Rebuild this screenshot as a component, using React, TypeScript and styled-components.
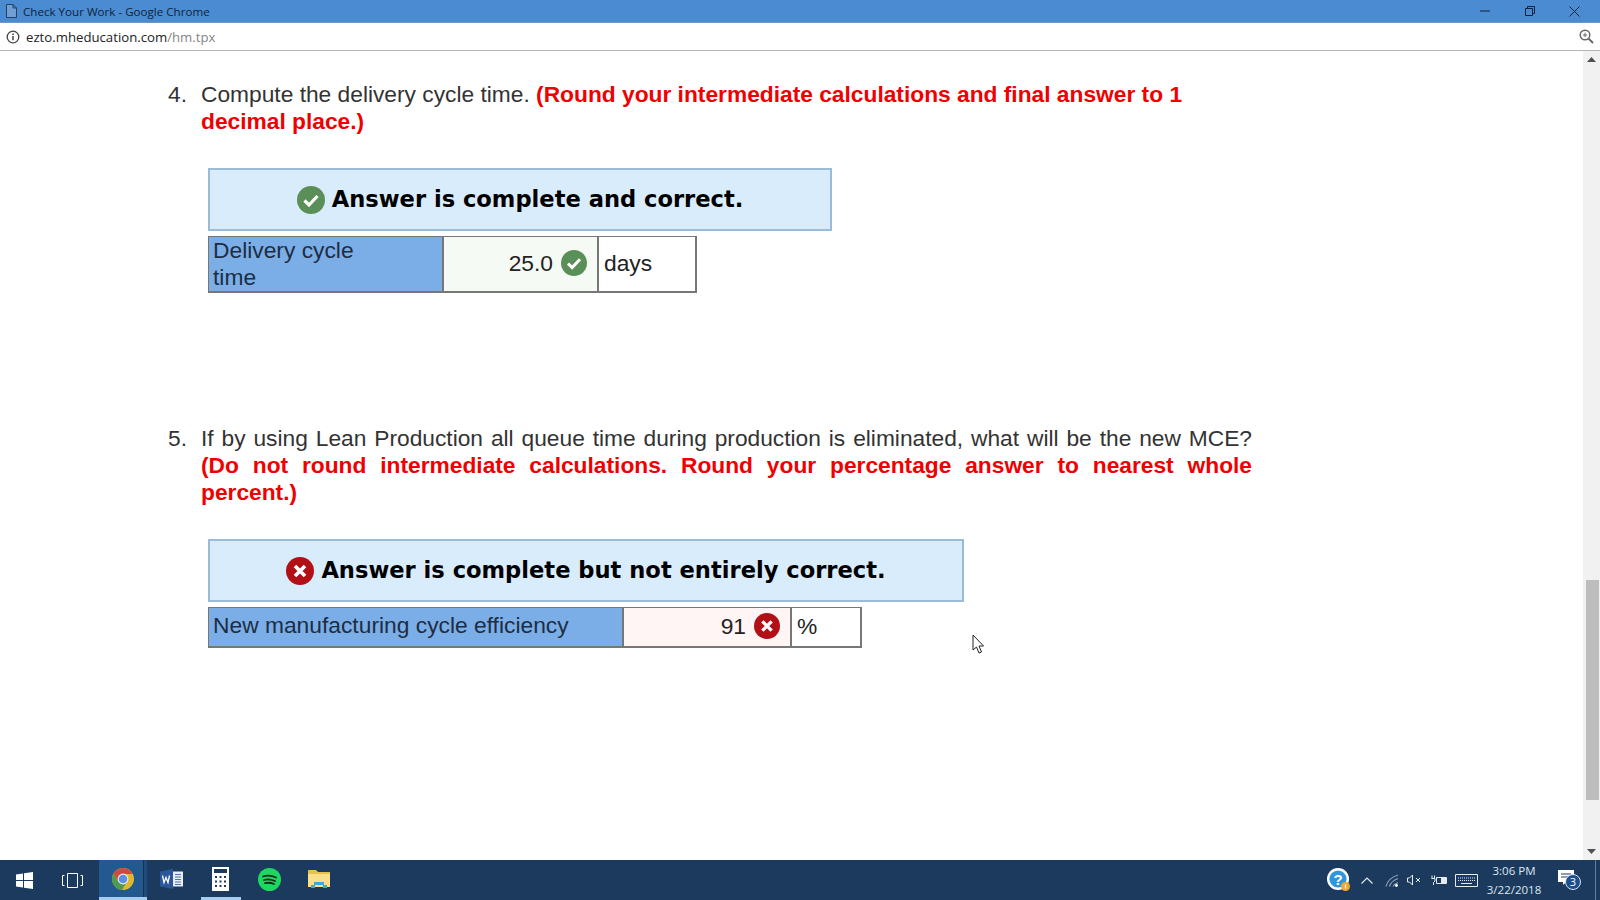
import React from "react"
import styled, { createGlobalStyle } from "styled-components"

const Global = createGlobalStyle`
  html, body { margin: 0; padding: 0; background: #fff; overflow: hidden; }
  body { font-family: "Liberation Sans", Arial, sans-serif; }
`

const Screen = styled.div`
  position: relative;
  display: flex;
  flex-direction: column;
  width: 1600px;
  height: 900px;
  overflow: hidden;
`

const TitleBar = styled.div`
  display: flex;
  align-items: center;
  height: 23px;
  flex: none;
  padding-left: 6px;
  background: #4a8bd1;
  border-bottom: 1px solid #6f98c4;
  box-sizing: border-box;
`
const TitleText = styled.span`
  margin-left: 6px;
  flex: 1;
  font-family: "Open Sans", sans-serif;
  font-size: 11.6px;
  color: #10233a;
`
const WindowButton = styled.div`
  display: flex;
  justify-content: center;
  width: 45px;
`
const WindowButtons = styled.div`
  display: flex;
  margin-right: 3px;
`

const AddressBar = styled.div`
  display: flex;
  align-items: center;
  height: 28px;
  flex: none;
  padding: 0 6px;
  box-sizing: border-box;
  background: #fff;
  border-bottom: 1px solid #b4b4b4;
`
const Url = styled.span`
  margin-left: 6px;
  flex: 1;
  font-family: "Open Sans", sans-serif;
  font-size: 13.2px;
  color: #222;
`
const UrlPath = styled.span`
  color: #858585;
`

const Body = styled.div`
  display: flex;
  flex: 1;
  min-height: 0;
`
const Page = styled.main`
  flex: 1;
  padding: 30px 0 0 168px;
  background: #fff;
`
const Question = styled.section<{ $gap: number }>`
  display: flex;
  width: 1084px;
  margin-bottom: ${(p) => p.$gap}px;
  font-size: 22.75px;
  line-height: 27px;
  color: #333;
`
const Num = styled.div`
  width: 33px;
  flex: none;
`
const Prompt = styled.div<{ $justify?: boolean }>`
  flex: 1;
  ${(p) => p.$justify && "text-align: justify;"}
`
const Red = styled.strong`
  color: #f00000;
`
const Answer = styled.div<{ $gap: number }>`
  margin: 0 0 ${(p) => p.$gap}px 40px;
`
const Banner = styled.div<{ $w: number }>`
  display: flex;
  align-items: center;
  justify-content: center;
  gap: 7px;
  box-sizing: border-box;
  width: ${(p) => p.$w}px;
  height: 63px;
  padding-bottom: 2px;
  background: #d9ecfb;
  border: 2px solid #9bbcd9;
  font-family: "DejaVu Sans", sans-serif;
  font-weight: bold;
  font-size: 22.6px;
  color: #000;

  svg {
    margin-top: 2px;
  }
`
const Row = styled.div<{ $h: number }>`
  display: flex;
  width: fit-content;
  height: ${(p) => p.$h}px;
  margin-top: 5px;
  box-sizing: border-box;
  border: 2px solid #777;
  border-top-width: 1px;
  border-left-width: 1px;
  font-size: 22.8px;
  line-height: 27px;
  color: #222;
`
const LabelCell = styled.div<{ $w: number; $lift?: number }>`
  display: flex;
  align-items: center;
  box-sizing: border-box;
  width: ${(p) => p.$w}px;
  padding: 0 0 ${(p) => p.$lift ?? 0}px 4px;
  background: #7baee6;
  border-right: 2px solid #777;
  color: #1d2d44;
`
const ValueCell = styled.div<{ $w: number; $tint: string }>`
  display: flex;
  align-items: center;
  justify-content: flex-end;
  gap: 8px;
  box-sizing: border-box;
  width: ${(p) => p.$w}px;
  padding: 0 10px 2px 0;
  background: ${(p) => p.$tint};
  border-right: 2px solid #777;
`
const UnitCell = styled.div<{ $w: number }>`
  display: flex;
  align-items: center;
  box-sizing: border-box;
  width: ${(p) => p.$w}px;
  padding: 0 0 2px 5px;
  background: #fff;
`

const Scrollbar = styled.div`
  display: flex;
  flex-direction: column;
  align-items: center;
  justify-content: space-between;
  width: 17px;
  flex: none;
  background: #f1f1f1;
`
const ScrollArrow = styled.div`
  display: flex;
  align-items: center;
  justify-content: center;
  height: 17px;
  width: 100%;
  flex: none;
`
const ScrollTrack = styled.div`
  flex: 1;
  width: 100%;
  display: flex;
  flex-direction: column;
  justify-content: flex-end;
  padding-bottom: 43px;
  box-sizing: border-box;
  align-items: center;
`
const ScrollThumb = styled.div`
  width: 13px;
  height: 220px;
  margin-left: 1px;
  background: #bdbdbd;
`

const Taskbar = styled.footer`
  display: flex;
  align-items: center;
  height: 40px;
  flex: none;
  background: #1b3a5e;
  color: #fff;
`
const TaskItem = styled.div<{ $w?: number; $active?: boolean; $open?: boolean }>`
  display: flex;
  align-items: center;
  justify-content: center;
  box-sizing: border-box;
  width: ${(p) => p.$w ?? 49}px;
  height: 40px;
  padding-bottom: 2px;
  background-repeat: no-repeat;
  ${(p) =>
    p.$active &&
    `background-image: linear-gradient(#a6cdf0, #a6cdf0), linear-gradient(to right, #22598f 44px, #15324f 44px, #15324f 45px, #1f4c7c 45px);
     background-size: 100% 3px, 100% 100%;
     background-position: bottom, center;`}
  ${(p) =>
    p.$open &&
    `background-image: linear-gradient(#a6cdf0, #a6cdf0);
     background-size: 40px 3px;
     background-position: bottom;`}
`
const StartItem = styled(TaskItem)`
  padding-bottom: 0;
`
const TaskView = styled(TaskItem)`
  margin-right: 3px;
  padding-bottom: 0;
`
const Tray = styled.div`
  display: flex;
  align-items: center;
  margin-left: auto;
  height: 100%;
`
const TrayIcon = styled.div<{ $w: number }>`
  display: flex;
  justify-content: center;
  width: ${(p) => p.$w}px;
`
const Clock = styled.div`
  width: 62px;
  margin-right: 8px;
  text-align: center;
  font-family: "Open Sans", sans-serif;
  font-size: 11.5px;
  line-height: 19px;
  color: #dfe6ee;
`
const ShowDesktop = styled.div`
  width: 1px;
  height: 40px;
  margin: 0 4px 0 8px;
  background: #5f7d9d;
`
const Pointer = styled.svg`
  position: absolute;
  left: 972px;
  top: 634px;
`

const CheckIcon = ({ size }: { size: number }) => (
  <svg width={size} height={size} viewBox="0 0 28 28">
    <circle cx="14" cy="14" r="14" fill="#5a8f57" />
    <path d="M7.5 14.5l4.5 4.5 8.5-9" fill="none" stroke="#fff" strokeWidth="3.2" />
  </svg>
)
const CrossIcon = ({ size }: { size: number }) => (
  <svg width={size} height={size} viewBox="0 0 28 28">
    <circle cx="14" cy="14" r="14" fill="#b01016" />
    <path d="M9 9l10 10M19 9L9 19" fill="none" stroke="#fff" strokeWidth="3.6" />
  </svg>
)

export default function App() {
  return (
    <Screen>
      <Global />
      <TitleBar>
        <svg width="11" height="14" viewBox="0 0 11 14">
          <path d="M.5.5h6.5l3.5 3.5v9.5H.5zM7 .5V4h3.5" fill="#6f9fd4" stroke="#26405f" strokeWidth="1" />
        </svg>
        <TitleText>Check Your Work - Google Chrome</TitleText>
        <WindowButtons>
          <WindowButton>
            <svg width="10" height="10" viewBox="0 0 10 10"><path d="M0 5h10" stroke="#10233a" /></svg>
          </WindowButton>
          <WindowButton>
            <svg width="10" height="10" viewBox="0 0 10 10">
              <path d="M.5 2.5h7v7h-7zM2.5 2.5v-2h7v7h-2" fill="none" stroke="#10233a" />
            </svg>
          </WindowButton>
          <WindowButton>
            <svg width="11" height="11" viewBox="0 0 11 11"><path d="M.5.5l10 10M10.5.5l-10 10" stroke="#10233a" /></svg>
          </WindowButton>
        </WindowButtons>
      </TitleBar>
      <AddressBar>
        <svg width="14" height="14" viewBox="0 0 14 14">
          <circle cx="7" cy="7" r="5.8" fill="none" stroke="#444" strokeWidth="1.3" />
          <path d="M7 6v4.2M7 3.4v1.5" stroke="#444" strokeWidth="1.5" />
        </svg>
        <Url>
          ezto.mheducation.com<UrlPath>/hm.tpx</UrlPath>
        </Url>
        <svg width="15" height="15" viewBox="0 0 15 15">
          <circle cx="6" cy="6" r="4.8" fill="none" stroke="#666" strokeWidth="1.4" />
          <path d="M9.5 9.5l4.5 4.5" stroke="#666" strokeWidth="1.8" />
          <path d="M3.8 6h4.4M6 3.8v4.4" stroke="#666" />
        </svg>
      </AddressBar>
      <Body>
        <Page>
          <Question $gap={33}>
            <Num>4.</Num>
            <Prompt>
              Compute the delivery cycle time. <Red>(Round your intermediate calculations and final answer to 1 decimal place.)</Red>
            </Prompt>
          </Question>
          <Answer $gap={132}>
            <Banner $w={624}>
              <CheckIcon size={28} />
              Answer is complete and correct.
            </Banner>
            <Row $h={57}>
              <LabelCell $w={235}>
                Delivery cycle
                <br />
                time
              </LabelCell>
              <ValueCell $w={155} $tint="#f5faf5">
                25.0 <CheckIcon size={26} />
              </ValueCell>
              <UnitCell $w={96}>days</UnitCell>
            </Row>
          </Answer>
          <Question $gap={33}>
            <Num>5.</Num>
            <Prompt $justify>
              If by using Lean Production all queue time during production is eliminated, what will be the new MCE? <Red>(Do not round intermediate calculations. Round your percentage answer to nearest whole percent.)</Red>
            </Prompt>
          </Question>
          <Answer $gap={0}>
            <Banner $w={756}>
              <CrossIcon size={28} />
              Answer is complete but not entirely correct.
            </Banner>
            <Row $h={41}>
              <LabelCell $w={415} $lift={3}>New manufacturing cycle efficiency</LabelCell>
              <ValueCell $w={168} $tint="#fff5f4">
                91 <CrossIcon size={26} />
              </ValueCell>
              <UnitCell $w={68}>%</UnitCell>
            </Row>
          </Answer>
        </Page>
        <Scrollbar>
          <ScrollArrow>
            <svg width="9" height="5" viewBox="0 0 9 5"><path d="M4.5 0L9 5H0z" fill="#505050" /></svg>
          </ScrollArrow>
          <ScrollTrack>
            <ScrollThumb />
          </ScrollTrack>
          <ScrollArrow>
            <svg width="9" height="5" viewBox="0 0 9 5"><path d="M0 0h9L4.5 5z" fill="#505050" /></svg>
          </ScrollArrow>
        </Scrollbar>
      </Body>
      <Taskbar>
        <StartItem $w={48}>
          <svg width="17" height="17" viewBox="0 0 17 17">
            <path d="M0 2.4L7 1.4V8H0zM8 1.3L17 0v8H8zM0 9h7v6.6L0 14.6zM8 9h9v8L8 15.7z" fill="#fff" />
          </svg>
        </StartItem>
        <TaskView $w={48}>
          <svg width="21" height="15" viewBox="0 0 21 15">
            <path d="M5.5.5h10v14h-10zM2.5 2.5h-2v10h2M18.5 2.5h2v10h-2" fill="none" stroke="#fff" />
          </svg>
        </TaskView>
        <TaskItem $w={48} $active>
          <svg width="22" height="22" viewBox="0 0 22 22">
            <circle cx="11" cy="11" r="11" fill="#e0b82e" />
            <path d="M11 0a11 11 0 0 0-9.5 5.5L6 13.500 11 6h9.500A11 11 0 0 0 11 0z" fill="#cf4b3e" />
            <path d="M1.500 5.500A11 11 0 0 0 10 22l4.500-7.500-8.500-1z" fill="#4d9b52" />
            <circle cx="11" cy="11" r="5.400" fill="#e8eef8" />
            <circle cx="11" cy="11" r="4.300" fill="#5d8fe0" />
          </svg>
        </TaskItem>
        <TaskItem>
          <svg width="23" height="20" viewBox="0 0 23 20">
            <path d="M0 2.500L13 0v20L0 17.500z" fill="#2b579a" />
            <path d="M13 2.500h10v15H13z" fill="#e9edf5" />
            <path d="M15 5.500h6M15 8h6M15 10.500h6M15 13h6M15 15.500h6" stroke="#4f74ad" />
            <path d="M2.500 6.500l1.500 7 2-5 2 5 1.500-7" fill="none" stroke="#fff" strokeWidth="1.300" />
          </svg>
        </TaskItem>
        <TaskItem $open>
          <svg width="17" height="24" viewBox="0 0 17 24">
            <path d="M0 0h17v24H0z" fill="#fff" />
            <path d="M2 2h13v4H2z" fill="#1b3a5e" />
            <path d="M3 9h2v2H3zM7.500 9h2v2h-2zM12 9h2v2h-2zM3 13.500h2v2H3zM7.500 13.500h2v2h-2zM12 13.500h2v2h-2zM3 18h2v2H3zM7.500 18h2v2h-2zM12 18h2v2h-2z" fill="#1b3a5e" />
          </svg>
        </TaskItem>
        <TaskItem>
          <svg width="23" height="23" viewBox="0 0 23 23">
            <circle cx="11.500" cy="11.500" r="11.500" fill="#1ed760" />
            <path d="M5 8.500q6.500-2 13 1M6 12q5.500-1.600 11 1M7 15.200q4.500-1.200 9 .8" fill="none" stroke="#10301c" strokeWidth="1.800" strokeLinecap="round" />
          </svg>
        </TaskItem>
        <TaskItem>
          <svg width="22" height="19" viewBox="0 0 22 19">
            <path d="M0 0h8l2 2h12v15H0z" fill="#e6c14e" />
            <path d="M0 4h22v13H0z" fill="#fbe08b" />
            <path d="M3 18v-3h3v-3h10v3h3v3h-4v-3H7v3z" fill="#3fa6de" />
          </svg>
        </TaskItem>
        <Tray>
          <TrayIcon $w={24}>
            <svg width="24" height="24" viewBox="0 0 24 24">
              <circle cx="11" cy="11" r="11" fill="#fff" />
              <circle cx="11" cy="11" r="8.600" fill="#2f97de" />
              <text x="11" y="16.500" textAnchor="middle" fontFamily="Liberation Sans" fontWeight="bold" fontSize="15" fill="#fff">?</text>
              <circle cx="18.500" cy="18.500" r="4.500" fill="#f0a92c" />
              <path d="M18.500 16.500v4" stroke="#fff" strokeWidth="1.200" />
            </svg>
          </TrayIcon>
          <TrayIcon $w={32}>
            <svg width="12" height="7" viewBox="0 0 12 7"><path d="M.5 6.500L6 1l5.500 5.500" fill="none" stroke="#e6ebf1" strokeWidth="1.200" /></svg>
          </TrayIcon>
          <TrayIcon $w={18}>
            <svg width="14" height="13" viewBox="0 0 14 13">
              <path d="M1 12.500Q3 4 13 1M4.500 12.500Q6 7 13 4.500M8 12.500Q9 10 13 8.500" fill="none" stroke="#8ea2b8" strokeWidth="1.100" />
              <circle cx="11.500" cy="11.500" r="1.400" fill="#fff" />
            </svg>
          </TrayIcon>
          <TrayIcon $w={27}>
            <svg width="15" height="12" viewBox="0 0 15 12">
              <path d="M.5 4v4h2l3 3V1l-3 3z" fill="none" stroke="#e6ebf1" />
              <path d="M9 4l4 4M13 4l-4 4" stroke="#e6ebf1" />
            </svg>
          </TrayIcon>
          <TrayIcon $w={22}>
            <svg width="16" height="10" viewBox="0 0 16 10">
              <path d="M5.500 2.500h10v6h-10z" fill="none" stroke="#e6ebf1" />
              <path d="M10 3h5v5h-5z" fill="#e6ebf1" />
              <path d="M1 .5v3M3.500.5v3M.5 3.500h3.500V6L2.500 7.500V10" fill="none" stroke="#e6ebf1" />
            </svg>
          </TrayIcon>
          <TrayIcon $w={33}>
            <svg width="23" height="13" viewBox="0 0 23 13">
              <path d="M.5.5h22v12H.5z" fill="none" stroke="#e6ebf1" />
              <path d="M3 4h17M3 6.500h17" stroke="#e6ebf1" strokeDasharray="1 1" />
              <path d="M6 9.500h11" stroke="#e6ebf1" />
            </svg>
          </TrayIcon>
          <Clock>
            3:06 PM
            <br />
            3/22/2018
          </Clock>
          <TrayIcon $w={34}>
            <svg width="26" height="24" viewBox="0 0 26 24">
              <path d="M1 2h16v12H9l-3 3v-3H1z" fill="#fff" />
              <path d="M4 6h10M4 9h10" stroke="#1b3a5e" />
              <circle cx="16" cy="14" r="7.500" fill="#1d4f8c" stroke="#dbe6f2" />
              <text x="16" y="18" textAnchor="middle" fontFamily="Open Sans" fontSize="11" fill="#fff">3</text>
            </svg>
          </TrayIcon>
          <ShowDesktop />
        </Tray>
      </Taskbar>
      <Pointer width="13" height="20" viewBox="0 0 13 20">
        <path d="M1 1v15l3.500-3 2.500 6 2.500-1-2.500-6h4.500z" fill="#fff" stroke="#222" />
      </Pointer>
    </Screen>
  )
}
